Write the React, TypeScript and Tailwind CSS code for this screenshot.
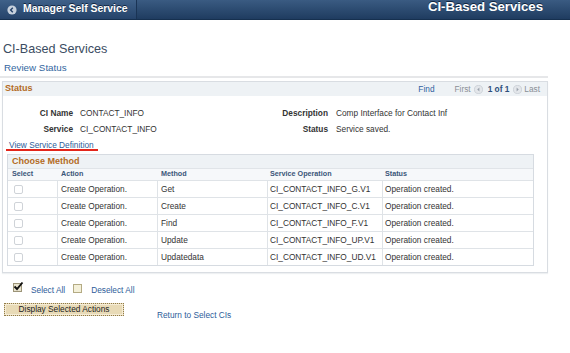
import React from "react";

const rows = [
  { method: "Get", op: "CI_CONTACT_INFO_G.V1" },
  { method: "Create", op: "CI_CONTACT_INFO_C.V1" },
  { method: "Find", op: "CI_CONTACT_INFO_F.V1" },
  { method: "Update", op: "CI_CONTACT_INFO_UP.V1" },
  { method: "Updatedata", op: "CI_CONTACT_INFO_UD.V1" },
];

function NavArrow({ dir }: { dir: "l" | "r" }) {
  return (
    <svg width="9" height="9" viewBox="0 0 10 10">
      <circle cx="5" cy="5" r="4.5" fill="#e4e7eb" stroke="#c3c8cf" strokeWidth="0.8" />
      {dir === "l" ? (
        <path d="M6 2.8 L3.6 5 L6 7.2 Z" fill="#9aa2ad" />
      ) : (
        <path d="M4 2.8 L6.4 5 L4 7.2 Z" fill="#9aa2ad" />
      )}
    </svg>
  );
}

export default function App() {
  return (
    <div
      className="relative w-[570px] h-[353px] overflow-hidden bg-white text-[8.3px] text-[#333]"
      style={{ fontFamily: '"Liberation Sans", Arial, sans-serif' }}
    >
      {/* Header */}
      <div className="flex h-[20px] bg-gradient-to-b from-[#3a5b82] to-[#1f3c60] border-b border-[#16304f]">
        <div className="flex w-[137px] items-center border-r border-[#1a3455] bg-gradient-to-b from-[#3f6189] to-[#25436a] pl-[7px]">
          <svg width="10" height="10" viewBox="0 0 10 10" className="mr-[6px]">
            <circle cx="5" cy="5" r="4.6" fill="#c7d1dd" />
            <path d="M5.8 2.7 L3.6 5 L5.8 7.3" fill="none" stroke="#24426a" strokeWidth="1.4" />
          </svg>
          <span className="text-[10.4px] font-bold text-white leading-none [text-shadow:0_-1px_0_#10243d]">
            Manager Self Service
          </span>
        </div>
        <div className="ml-auto mr-[27px] mt-0 text-[13.2px] font-bold leading-[13px] text-white [text-shadow:0_-1px_0_#10243d]">
          CI-Based Services
        </div>
      </div>

      {/* Title */}
      <div className="mt-[22px] pl-[3px] text-[12.6px] leading-[15px] text-[#3b4c62]">CI-Based Services</div>
      <div className="mt-[5px] pl-[4px] text-[9.8px] leading-[12px] text-[#3266a0]">Review Status</div>
      <div className="mt-[2px] h-[2px] w-[548px] bg-[#e6e7e9]" />

      {/* Status box */}
      <div className="ml-[2px] mt-[3px] w-[546px] border border-[#d9dde2] shadow-[0_1px_1px_#eef0f2]">
        <div className="flex h-[14px] items-center bg-[#eef2f5] pl-[2px] pr-[7px]">
          <span className="text-[9px] font-bold text-[#b36b1f]">Status</span>
          <span className="ml-auto text-[#3061a0]">Find</span>
          <span className="ml-[20px] text-[#8a8f96]">First</span>
          <span className="ml-[3px] flex items-center">
            <NavArrow dir="l" />
          </span>
          <span className="ml-[5px] font-bold text-[#2d4f7c]">1 of 1</span>
          <span className="ml-[4px] flex items-center">
            <NavArrow dir="r" />
          </span>
          <span className="ml-[2px] text-[#8a8f96]">Last</span>
        </div>

        <div className="pt-[9px]">
          <div className="flex h-[16px] items-center">
            <span className="w-[70px] text-right font-bold">CI Name</span>
            <span className="ml-[7px] w-[176px]">CONTACT_INFO</span>
            <span className="w-[72px] text-right font-bold">Description</span>
            <span className="ml-[8px]">Comp Interface for Contact Inf</span>
          </div>
          <div className="flex h-[16px] items-center">
            <span className="w-[70px] text-right font-bold">Service</span>
            <span className="ml-[7px] w-[176px]">CI_CONTACT_INFO</span>
            <span className="w-[72px] text-right font-bold">Status</span>
            <span className="ml-[8px]">Service saved.</span>
          </div>
        </div>

        <div className="flex h-[17px] items-center pl-[6px]">
          <span className="relative text-[#2d5c99] underline">
            View Service Definition
            <span className="absolute left-[-3px] top-[10px] h-[2px] w-[92px] bg-[#e3261b]" />
          </span>
        </div>

        {/* Inner grid */}
        <div className="ml-[4px] w-[527px] border border-[#d6dbe1]">
          <div className="flex h-[13px] items-center bg-[#eef2f5] pl-[4px]">
            <span className="text-[9px] font-bold text-[#b36b1f]">Choose Method</span>
          </div>
          <div className="grid h-[12px] grid-cols-[49px_100px_110px_115px_1fr] items-center border-t border-[#e0e4e8] bg-[#f6f8fa] text-[7.2px] font-bold text-[#3a5679]">
            <span className="pl-[4px]">Select</span>
            <span className="pl-[4px]">Action</span>
            <span className="pl-[4px]">Method</span>
            <span className="pl-[3px]">Service Operation</span>
            <span className="pl-[3px]">Status</span>
          </div>
          {rows.map((r) => (
            <div
              key={r.method}
              className="grid h-[17px] grid-cols-[49px_100px_110px_115px_1fr] border-t border-[#dfe3e7]"
            >
              <div className="flex items-center pl-[6px]">
                <span className="h-[9px] w-[9px] rounded-[2px] border border-[#cfd3d8] bg-white" />
              </div>
              <div className="flex items-center border-l border-[#dfe3e7] pl-[3px]">Create Operation.</div>
              <div className="flex items-center border-l border-[#dfe3e7] pl-[3px]">{r.method}</div>
              <div className="flex items-center border-l border-[#dfe3e7] pl-[2px]">{r.op}</div>
              <div className="flex items-center border-l border-[#dfe3e7] pl-[2px]">Operation created.</div>
            </div>
          ))}
        </div>
        <div className="h-[6px]" />
      </div>

      {/* Select all */}
      <div className="mt-[10px] flex h-[12px] items-end pl-[13px]">
        <span className="relative mb-[3px] h-[9px] w-[9px] border border-[#9c9478] bg-[#e9e4cf]">
          <svg width="11" height="10" viewBox="0 0 11 10" className="absolute left-[-1px] top-[-3px]">
            <path d="M1.5 5.5 L4 8 L9.5 1.5" fill="none" stroke="#111" strokeWidth="1.9" />
          </svg>
        </span>
        <span className="ml-[9px] leading-[10px] text-[#2d5c99]">Select All</span>
        <span className="ml-[8px] mb-[2px] h-[9px] w-[9px] border border-[#b4ab84] bg-[#f4f0d9]" />
        <span className="ml-[9px] leading-[10px] text-[#2d5c99]">Deselect All</span>
      </div>

      {/* Button */}
      <div className="mt-[8px] flex items-start pl-[4px]">
        <div className="flex h-[13px] w-[120px] items-center justify-center border border-dotted border-[#8f7a4a] bg-[#e8dab6] shadow-[inset_0_0_0_1px_#f5ecd6] text-[#222]">
          Display Selected Actions
        </div>
        <span className="ml-[33px] mt-[6px] text-[#2d5c99]">Return to Select CIs</span>
      </div>
    </div>
  );
}
